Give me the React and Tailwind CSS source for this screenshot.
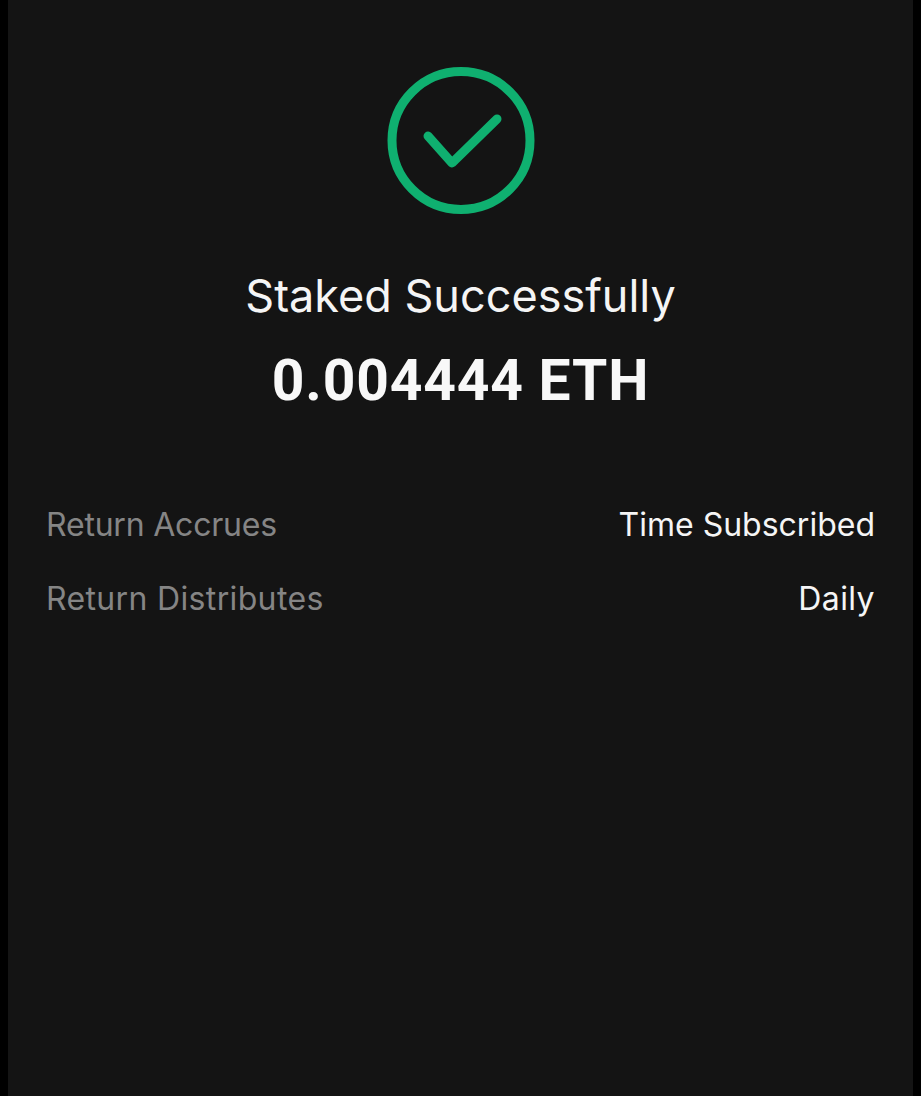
export default function App() {
  return (
    <div className="h-[1096px] w-[921px] overflow-hidden bg-black px-2 font-['Inter','Noto_Sans',sans-serif]">
      <div className="flex h-full flex-col items-center bg-[#141414] pt-[67px]">
        <svg width="147" height="147" viewBox="0 0 147 147" fill="none" className="ml-px shrink-0 overflow-visible">
          <circle cx="73" cy="73.5" r="69" stroke="#0fb070" strokeWidth="9" />
          <path d="M40 69 L64 96 L109 52" stroke="#0fb070" strokeWidth="9" strokeLinecap="round" strokeLinejoin="round" />
        </svg>
        <h1 className="mt-[55px] text-[45px] leading-[54px] font-normal text-[#f5f5f5]">Staked Successfully</h1>
        <p className="mt-[30px] font-['Roboto',sans-serif] text-[57px] leading-[56px] font-bold tracking-[0.8px] text-[#f8f8f8]">0.004444 ETH</p>
        <div className="mt-[99px] flex w-full flex-col gap-[40px] px-[38px] text-[32px] leading-[34px]">
          <div className="flex justify-between">
            <span className="tracking-[-0.2px] text-[#858585]">Return Accrues</span>
            <span className="text-[#f5f5f5]">Time Subscribed</span>
          </div>
          <div className="flex justify-between">
            <span className="tracking-[0.35px] text-[#858585]">Return Distributes</span>
            <span className="tracking-[0.4px] text-[#f5f5f5]">Daily</span>
          </div>
        </div>
      </div>
    </div>
  );
}
